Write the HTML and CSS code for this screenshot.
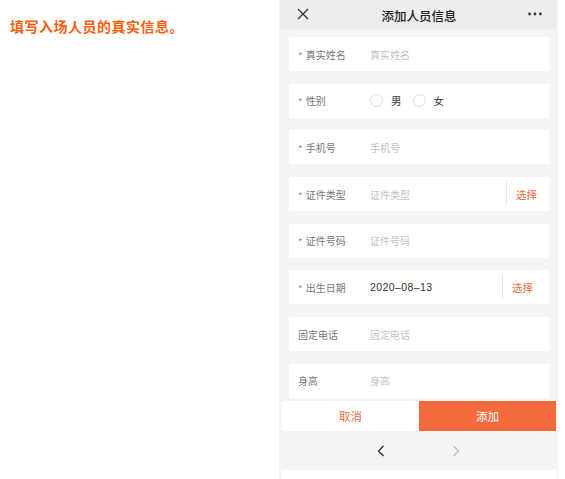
FILE: index.html
```html
<!DOCTYPE html>
<html lang="zh">
<head>
<meta charset="utf-8">
<title>添加人员信息</title>
<link rel="stylesheet" href="styles.css">
</head>
<body>
<div class="page">
  <div class="intro">
    <p class="intro-text">填写入场人员的真实信息。</p>
  </div>
  <div class="phone">
    <div class="topbar">
      <svg class="close" width="12" height="12" viewBox="0 0 12 12"><path d="M1 1L11 11M11 1L1 11" stroke="#333" stroke-width="1.3" fill="none"/></svg>
      <div class="title">添加人员信息</div>
      <svg class="more" width="14" height="4" viewBox="0 0 14 4"><circle cx="1.6" cy="2" r="1.4" fill="#333"/><circle cx="7" cy="2" r="1.4" fill="#333"/><circle cx="12.4" cy="2" r="1.4" fill="#333"/></svg>
    </div>
    <div class="list">
      <div class="card"><span class="label"><i class="star">*</i>真实姓名</span><span class="ph">真实姓名</span></div>
      <div class="card"><span class="label"><i class="star">*</i>性别</span>
        <span class="radios"><span class="radio"></span><span class="opt">男</span><span class="radio"></span><span class="opt">女</span></span></div>
      <div class="card"><span class="label"><i class="star">*</i>手机号</span><span class="ph">手机号</span></div>
      <div class="card"><span class="label"><i class="star">*</i>证件类型</span><span class="ph grow">证件类型</span><span class="sel">选择</span></div>
      <div class="card"><span class="label"><i class="star">*</i>证件号码</span><span class="ph">证件号码</span></div>
      <div class="card"><span class="label"><i class="star">*</i>出生日期</span><span class="val grow">2020–08–13</span><span class="sel sel-date">选择</span></div>
      <div class="card"><span class="label">固定电话</span><span class="ph">固定电话</span></div>
      <div class="card"><span class="label">身高</span><span class="ph">身高</span></div>
    </div>
    <div class="actions">
      <div class="btn cancel">取消</div>
      <div class="btn add">添加</div>
    </div>
    <div class="navbar">
      <svg width="8" height="12" viewBox="0 0 8 12"><path d="M6.5 1L1.5 6L6.5 11" stroke="#222" stroke-width="1.2" fill="none"/></svg>
      <svg width="8" height="12" viewBox="0 0 8 12"><path d="M1.5 1L6.5 6L1.5 11" stroke="#bdbdbd" stroke-width="1.2" fill="none"/></svg>
    </div>
    <div class="bottom"></div>
  </div>
</div>
</body>
</html>
```
FILE: styles.css
```css
* { box-sizing: border-box; }
html, body { margin: 0; padding: 0; background: #fff; }
body {
  font-family: "Noto Sans CJK SC", "Noto Sans", "Liberation Sans", sans-serif;
  width: 565px;
  height: 479px;
  overflow: hidden;
}
.page { display: flex; height: 479px; }
.intro { width: 279px; padding: 16px 0 0 10px; }
.intro-text {
  margin: 0;
  color: #f5600f;
  font-size: 14px;
  font-weight: 700;
  line-height: 20px;
  letter-spacing: 0.5px;
}
.phone {
  width: 279px;
  background: #f5f5f5;
  display: flex;
  flex-direction: column;
  height: 479px;
}
.topbar {
  height: 30px;
  background: #ededed;
  display: flex;
  align-items: center;
  position: relative;
  margin-left: 1px;
  margin-right: 2px;
}
.close { position: absolute; left: 17px; top: 8px; }
.more { position: absolute; right: 14px; top: 12px; }
.title {
  flex: 1;
  text-align: center;
  font-size: 12.5px;
  font-weight: 500;
  color: #222;
  padding-left: 2px;
}
.list {
  height: 371px;
  overflow: hidden;
  padding: 7px 9px 0 10px;
  display: flex;
  flex-direction: column;
  gap: 12.7px;
}
.card {
  flex: 0 0 34px;
  height: 34px;
  background: #fff;
  display: flex;
  align-items: center;
  padding-left: 9px;
  font-size: 10px;
}
.label {
  width: 72px;
  color: #777;
  display: flex;
  align-items: center;
}
.star {
  font-style: normal;
  color: #e8707a;
  font-size: 10px;
  margin-right: 3px;
  position: relative;
  top: 1px;
}
.ph { color: #c4c4c4; }
.val {
  color: #333;
  font-family: "Liberation Sans", sans-serif;
  font-size: 10.5px;
  letter-spacing: 0.4px;
}
.grow { flex: 1; }
.sel {
  height: 24px;
  border-left: 1px solid #e6e6e6;
  color: #f06a3a;
  display: flex;
  align-items: center;
  padding: 0 12px 0 9px;
  font-size: 10.5px;
}
.sel-date { padding-right: 16px; }
.radios { display: flex; align-items: center; }
.radio {
  width: 13px;
  height: 13px;
  border-radius: 50%;
  border: 1px solid #dcdcdc;
  background: #fff;
  margin-right: 8px;
}
.opt { color: #333; margin-right: 11px; font-size: 10.5px; }
.actions {
  display: flex;
  height: 30px;
  margin: 0 2px 0 3px;
}
.btn {
  flex: 1;
  display: flex;
  align-items: center;
  justify-content: center;
  font-size: 11.5px;
}
.cancel { background: #fff; color: #f06a3a; }
.add { background: #f46b3c; color: #fff; }
.navbar {
  height: 39px;
  display: flex;
  align-items: center;
  justify-content: center;
  gap: 67px;
  margin: 0 2px 0 3px;
  padding-right: 2px;
  background: #f4f4f4;
}
.bottom {
  flex: 1;
  background: #fff;
  margin: 0 2px 0 3px;
}
```
